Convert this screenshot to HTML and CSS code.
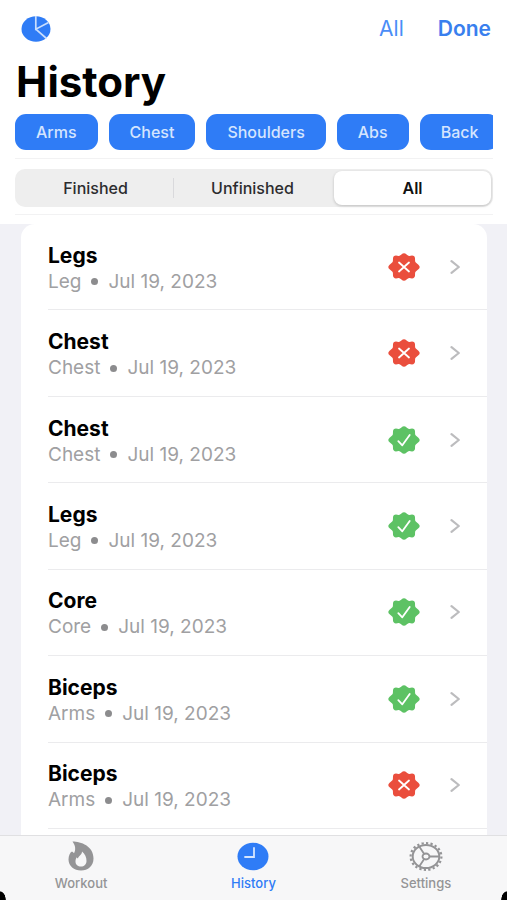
FILE: index.html
```html
<!DOCTYPE html>
<html lang="en">
<head>
<meta charset="utf-8">
<meta name="viewport" content="width=device-width, initial-scale=1">
<title>History</title>
<link rel="stylesheet" href="styles.css">
</head>
<body>
<svg class="sprite" aria-hidden="true">
  <symbol id="seal" viewBox="0 0 32 28" preserveAspectRatio="none">
    <path d="M13.4 1.4Q16-1 18.6 1.4L20 2.6Q20.600 3 21.400 2.900L24 2.600Q26.800 2.600 27 5.400L27.100 8Q27.100 8.800 27.800 9.400L30.400 11.700Q33 14 30.400 16.300L27.800 18.600Q27.100 19.200 27.100 20L27 22.600Q26.800 25.400 24 25.400L21.400 25.100Q20.600 25 20 25.400L18.600 26.600Q16 29 13.400 26.600L12 25.400Q11.400 25 10.600 25.100L8 25.400Q5.200 25.400 5 22.600L4.900 20Q4.900 19.200 4.200 18.600L1.600 16.300Q-1 14 1.600 11.700L4.200 9.400Q4.900 8.800 4.900 8L5 5.400Q5.200 2.600 8 2.600L10.600 2.900Q11.400 3 12 2.600Z" fill="currentColor"/>
  </symbol>
  <symbol id="failed" viewBox="0 0 32 28">
    <use href="#seal" width="32" height="28"/>
    <path d="M11 9.500 21 18.500M21 9.500 11 18.500" fill="none" stroke="#fff" stroke-width="1.800" stroke-linecap="round"/>
  </symbol>
  <symbol id="passed" viewBox="0 0 32 28">
    <use href="#seal" width="32" height="28"/>
    <path d="M10.300 15.200 14.300 19.300 21.700 9" fill="none" stroke="#fff" stroke-width="1.800" stroke-linecap="round" stroke-linejoin="round"/>
  </symbol>
  <symbol id="chevron" viewBox="0 0 12 14">
    <path d="M2.500 1.200 9.800 7 2.500 12.800" fill="none" stroke="#bcbcbe" stroke-width="2.200" stroke-linecap="round" stroke-linejoin="round"/>
  </symbol>
</svg>
<div class="app">
  <header class="header">
    <div class="toolbar">
      <button class="chart" type="button" aria-label="Statistics">
        <svg width="30" height="26" viewBox="0 0 30 26"><ellipse cx="15" cy="13" rx="14.500" ry="12.700" fill="#2f7cf6"/><path d="M14.800 0V13.200L27.500 6.500M14.800 13.200 25.500 22.500" fill="none" stroke="#c9defd" stroke-width="1.700"/></svg>
      </button>
      <button class="link" type="button">All</button>
      <button class="link strong" type="button">Done</button>
    </div>
    <h1>History</h1>
    <div class="chips">
      <button class="chip" type="button">Arms</button>
      <button class="chip" type="button">Chest</button>
      <button class="chip" type="button">Shoulders</button>
      <button class="chip" type="button">Abs</button>
      <button class="chip" type="button">Back</button>
    </div>
    <div class="filter">
      <div class="segments">
        <button class="segment" type="button">Finished</button>
        <button class="segment" type="button">Unfinished</button>
        <button class="segment selected" type="button" aria-pressed="true">All</button>
      </div>
    </div>
  </header>
  <main class="content">
    <ul class="list">
      <li><a class="row" href="#"><span class="info"><strong>Legs</strong><span class="meta">Leg<i></i>Jul 19, 2023</span></span><svg class="seal red"><use href="#failed"/></svg><svg class="chevron"><use href="#chevron"/></svg></a></li>
      <li><a class="row" href="#"><span class="info"><strong>Chest</strong><span class="meta">Chest<i></i>Jul 19, 2023</span></span><svg class="seal red"><use href="#failed"/></svg><svg class="chevron"><use href="#chevron"/></svg></a></li>
      <li><a class="row" href="#"><span class="info"><strong>Chest</strong><span class="meta">Chest<i></i>Jul 19, 2023</span></span><svg class="seal green"><use href="#passed"/></svg><svg class="chevron"><use href="#chevron"/></svg></a></li>
      <li><a class="row" href="#"><span class="info"><strong>Legs</strong><span class="meta">Leg<i></i>Jul 19, 2023</span></span><svg class="seal green"><use href="#passed"/></svg><svg class="chevron"><use href="#chevron"/></svg></a></li>
      <li><a class="row" href="#"><span class="info"><strong>Core</strong><span class="meta">Core<i></i>Jul 19, 2023</span></span><svg class="seal green"><use href="#passed"/></svg><svg class="chevron"><use href="#chevron"/></svg></a></li>
      <li><a class="row" href="#"><span class="info"><strong>Biceps</strong><span class="meta">Arms<i></i>Jul 19, 2023</span></span><svg class="seal green"><use href="#passed"/></svg><svg class="chevron"><use href="#chevron"/></svg></a></li>
      <li><a class="row" href="#"><span class="info"><strong>Biceps</strong><span class="meta">Arms<i></i>Jul 19, 2023</span></span><svg class="seal red"><use href="#failed"/></svg><svg class="chevron"><use href="#chevron"/></svg></a></li>
    </ul>
  </main>
  <nav class="tabs">
    <a class="tab" href="#">
      <svg width="34" height="30" viewBox="0 0 34 30"><path fill-rule="evenodd" d="M8.500.5C17 .5 29.500 5 29.500 17.500 29.500 25 24 29.500 17 29.500S4.500 25 4.500 18.500C4.500 14.500 6 11.500 8 10.500 8.800 11 9.300 11.500 10 12.300 11.800 9 11.800 5 8.500.5ZM18 10.500C18 14 14.500 14.500 14 17.500 13.300 17.200 13 16.800 12.800 16.200 11.800 17.500 11.500 19 11.500 20.500 11.500 23.800 14 25.500 17 25.500S22.500 23.500 22.500 20C22.500 16 21 13 18 10.500Z" fill="currentColor"/></svg>
      Workout
    </a>
    <a class="tab active" href="#" aria-current="page">
      <svg width="34" height="30" viewBox="0 0 34 30"><ellipse cx="17" cy="15.500" rx="15.500" ry="13.700" fill="currentColor"/><path d="M18 7V16H9" fill="none" stroke="#d5e5fe" stroke-width="1.800" stroke-linecap="round"/></svg>
      History
    </a>
    <a class="tab" href="#">
      <svg width="34" height="30" viewBox="0 0 34 30" fill="none" stroke="currentColor"><ellipse cx="17" cy="15.500" rx="15.400" ry="13.400" stroke-width="2.200" pathLength="80" stroke-dasharray="2 2"/><ellipse cx="17" cy="15.500" rx="13.300" ry="11.500" stroke-width="2"/><ellipse cx="17" cy="15.500" rx="3.500" ry="3" stroke-width="1.800"/><path d="M20.500 15.500H30.500M15.200 12.900 10.200 5.500M15.200 18.100 10.200 25.500" stroke-width="1.800"/></svg>
      Settings
    </a>
  </nav>
</div>
</body>
</html>
```

FILE: styles.css
```css
* { box-sizing: border-box; }

body {
  margin: 0;
  background: #fff;
  font-family: Inter, "Liberation Sans", sans-serif;
}

button {
  border: 0;
  padding: 0;
  background: none;
  font: inherit;
}

a { color: inherit; text-decoration: none; }

.sprite { position: absolute; width: 0; height: 0; }

.app {
  display: flex;
  flex-direction: column;
  height: 100vh;
  background: #fff;
}

.header { padding: 12px 14px 9px 15px; }

.toolbar {
  display: flex;
  align-items: center;
  height: 34px;
  padding: 0 2px 0 6px;
}

.chart { margin-right: auto; height: 26px; }
.chart svg { display: block; }

.link {
  color: #4a8df7;
  font-size: 21px;
  line-height: 24px;
}

.strong {
  margin-left: 34px;
  color: #397fee;
  font-weight: 600;
}

h1 {
  margin: 12px 0 8px 1px;
  font-size: 42px;
  line-height: 48px;
  font-weight: 700;
}

.chips {
  display: flex;
  gap: 11px;
  overflow: hidden;
}

.chip {
  flex: none;
  height: 36px;
  padding: 0 21px;
  border-radius: 11px;
  background: #2f7cf6;
  color: #d5e5fe;
  font-size: 16px;
  font-weight: 500;
}

.filter {
  margin-top: 8px;
  padding: 10px 0 7px;
  border-top: 1px solid #f2f2f3;
  border-bottom: 1px solid #f2f2f3;
}

.segments {
  display: flex;
  height: 38px;
  padding: 2px;
  border-radius: 10px;
  background: #eee;
}

.segment {
  flex: 1;
  position: relative;
  border-radius: 8px;
  color: #2c2c2e;
  font-size: 16px;
  font-weight: 500;
}

.segment:first-child::after {
  content: "";
  position: absolute;
  right: 0;
  top: 7px;
  bottom: 7px;
  width: 1px;
  background: #d9d9dc;
}

.selected {
  margin-left: 3px;
  background: #fff;
  box-shadow: 0 1px 3px rgba(0, 0, 0, 0.2);
  color: #111;
  font-weight: 600;
}

.content {
  flex: 1;
  min-height: 0;
  padding: 0 20px 0 21px;
  overflow: hidden;
  background: #f1f1f6;
}

.list {
  display: flex;
  flex-direction: column;
  height: 100%;
  margin: 0;
  padding: 0 0 6px 27px;
  border-radius: 14px 14px 0 0;
  background: #fff;
  list-style: none;
}

.list li {
  flex: 1;
  border-bottom: 1px solid #ebebed;
}

.row {
  display: flex;
  align-items: center;
  height: 100%;
  padding-right: 26px;
}

.info { flex: 1; padding-top: 3px; }

.info strong {
  display: block;
  font-size: 21px;
  line-height: 27px;
  font-weight: 700;
}

.meta {
  display: flex;
  align-items: center;
  color: #a0a0a2;
  font-size: 19px;
  line-height: 26px;
}

.meta i {
  width: 7px;
  height: 7px;
  margin: 0 10px;
  border-radius: 50%;
  background: #8c8c8e;
}

.seal { width: 32px; height: 28px; margin-right: 29px; }
.red { color: #ea4e3d; }
.green { color: #5dc264; }
.chevron { width: 12px; height: 14px; }

.tabs {
  display: grid;
  grid-template-columns: 8fr 9fr 8fr;
  height: 65px;
  border-top: 1px solid #e0e0e2;
  background:
    radial-gradient(6px 9px at 0 100%, #000 90%, transparent),
    radial-gradient(6px 9px at 100% 100%, #000 90%, transparent),
    #f7f7f8;
}

.tab {
  display: flex;
  flex-direction: column;
  align-items: center;
  gap: 4px;
  padding-top: 5px;
  color: #949496;
  font-size: 13px;
  line-height: 16px;
  font-weight: 500;
}

.active { color: #2f7cf6; }
```
